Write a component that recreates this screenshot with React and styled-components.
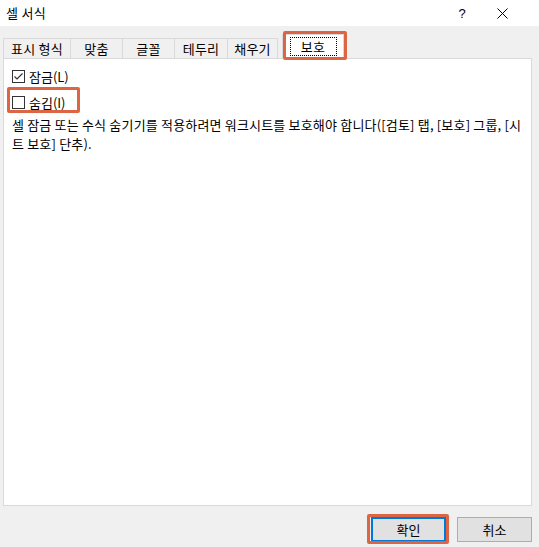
import React from "react";
import styled, { createGlobalStyle } from "styled-components";

const Global = createGlobalStyle`
  html, body { margin: 0; padding: 0; background: #f0f0f0; }
  body { font-family: "Noto Sans CJK KR", "Noto Sans", sans-serif; font-size: 13px; color: #000; }
`;

const HL = "#dc6644";

const Window = styled.div`
  width: 539px;
  height: 547px;
  background: #f0f0f0;
  display: flex;
  flex-direction: column;
  overflow: hidden;
`;

const TitleBar = styled.div`
  height: 26px;
  background: #fff;
  display: flex;
  align-items: center;
  padding: 0 14px 0 6px;
  font-size: 13px;
`;

const Title = styled.div`
  flex: 1;
  line-height: 26px;
  letter-spacing: 0.3px;
`;

const TitleBtn = styled.div`
  width: ${(p) => p.$w}px;
  height: 26px;
  display: flex;
  align-items: center;
  justify-content: center;
  font-family: "Liberation Sans", sans-serif;
  font-size: 13px;
`;

const Body = styled.div`
  flex: 1;
  display: flex;
  flex-direction: column;
  padding: 9px 7px 5px 3px;
`;

const TabBar = styled.div`
  display: flex;
  align-items: flex-end;
  height: 24px;
  position: relative;
  z-index: 1;
  margin-bottom: -1px;
`;

const Tab = styled.div`
  height: ${(p) => (p.$active ? 25 : 21)}px;
  width: ${(p) => p.$w}px;
  box-sizing: border-box;
  border: 1px solid #d9d9d9;
  border-left-width: ${(p) => (p.$first || p.$active ? 1 : 0)}px;
  border-bottom: ${(p) => (p.$active ? "none" : "1px solid #d9d9d9")};
  background: ${(p) => (p.$active ? "#fff" : "#f0f0f0")};
  display: flex;
  align-items: center;
  justify-content: center;
  font-size: 13px;
  letter-spacing: 0.2px;
  position: relative;
  margin-left: ${(p) => (p.$active ? 4 : 0)}px;
  padding-bottom: ${(p) => (p.$active ? 2 : 0)}px;
`;

const Focus = styled.div`
  box-sizing: border-box;
  width: 47px;
  height: 19px;
  border: 1px dotted #000;
  display: flex;
  align-items: center;
  justify-content: center;
`;

const TabHL = styled.div`
  position: absolute;
  left: 0px;
  top: -4px;
  width: 64px;
  height: 29px;
  box-sizing: border-box;
  border: 3px solid ${HL};
  border-radius: 2px;
`;

const Panel = styled.div`
  flex: 1;
  background: #fff;
  border: 1px solid #d9d9d9;
  padding: 11px 8px 0 8px;
  display: flex;
  flex-direction: column;
`;

const CheckRow = styled.label`
  display: flex;
  align-items: center;
  gap: 4px;
  height: 13px;
  margin-bottom: 13px;
  position: relative;
  font-size: 13px;
`;

const Box = styled.span`
  width: 13px;
  height: 13px;
  box-sizing: border-box;
  border: 1px solid #333;
  background: #fff;
  display: flex;
  align-items: center;
  justify-content: center;
`;

const RowHL = styled.div`
  position: absolute;
  left: -5px;
  top: -9px;
  width: 73px;
  height: 26px;
  box-sizing: border-box;
  border: 3px solid ${HL};
  border-radius: 2px;
`;

const Desc = styled.p`
  margin: -7px 0 0 0;
  font-size: 13px;
  letter-spacing: 0.18px;
  line-height: 19px;
  white-space: nowrap;
`;

const Footer = styled.div`
  display: flex;
  justify-content: flex-end;
  gap: 11px;
  padding-top: 11px;
`;

const Button = styled.button`
  position: relative;
  width: 75px;
  height: 25px;
  box-sizing: border-box;
  background: #e1e1e1;
  border: ${(p) => (p.$default ? "2px solid #0078d7" : "1px solid #adadad")};
  font-family: "Noto Sans CJK KR", sans-serif;
  font-size: 13px;
  color: #000;
  padding: 0;
  display: flex;
  align-items: center;
  justify-content: center;
`;

const BtnHL = styled.div`
  position: absolute;
  left: -6px;
  top: -5px;
  right: -5px;
  bottom: -4px;
  border: 3px solid ${HL};
  border-radius: 2px;
`;

export default function App() {
  const tabs = [
    { t: "표시 형식", w: 68 },
    { t: "맞춤", w: 52 },
    { t: "글꼴", w: 52 },
    { t: "테두리", w: 53 },
    { t: "채우기", w: 50 },
  ];
  return (
    <Window>
      <Global />
      <TitleBar>
        <Title>셀 서식</Title>
        <TitleBtn $w={34}>?</TitleBtn>
        <TitleBtn $w={46}>
          <svg width="11" height="11" viewBox="0 0 11 11">
            <path d="M0.5 0.5 L10.5 10.5 M10.5 0.5 L0.5 10.5" stroke="#000" strokeWidth="1" />
          </svg>
        </TitleBtn>
      </TitleBar>
      <Body>
        <TabBar>
          {tabs.map((x, i) => (
            <Tab key={x.t} $w={x.w} $first={i === 0}>
              {x.t}
            </Tab>
          ))}
          <Tab $w={62} $active>
            <Focus>보호</Focus>
            <TabHL />
          </Tab>
        </TabBar>
        <Panel>
          <CheckRow>
            <Box>
              <svg width="11" height="11" viewBox="0 0 11 11">
                <path d="M1.5 5.5 L4 8 L9.5 2.5" fill="none" stroke="#333" strokeWidth="1.2" />
              </svg>
            </Box>
            잠금(L)
          </CheckRow>
          <CheckRow>
            <Box />
            숨김(I)
            <RowHL />
          </CheckRow>
          <Desc>
            셀 잠금 또는 수식 숨기기를 적용하려면 워크시트를 보호해야 합니다([검토] 탭, [보호] 그룹, [시
            <br />
            트 보호] 단추).
          </Desc>
        </Panel>
        <Footer>
          <Button $default>
            확인
            <BtnHL />
          </Button>
          <Button>취소</Button>
        </Footer>
      </Body>
    </Window>
  );
}
